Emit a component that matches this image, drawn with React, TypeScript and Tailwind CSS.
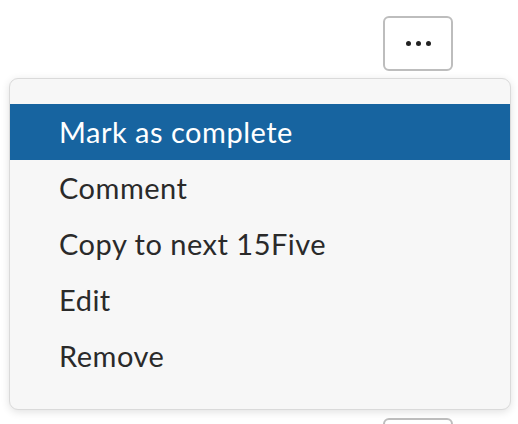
const items = ["Mark as complete", "Comment", "Copy to next 15Five", "Edit", "Remove"];

function Dots() {
  return (
    <div className="flex items-center gap-[5px]">
      <span className="block h-[5px] w-[5px] rounded-full bg-[#222]" />
      <span className="block h-[5px] w-[5px] rounded-full bg-[#222]" />
      <span className="block h-[5px] w-[5px] rounded-full bg-[#222]" />
    </div>
  );
}

export default function App() {
  return (
    <div
      className="h-[424px] w-[518px] overflow-hidden bg-white"
      style={{ fontFamily: "Lato, 'Open Sans', sans-serif" }}
    >
      <div className="flex justify-end pr-[65px] pt-[16px]">
        <button className="flex h-[55px] w-[70px] items-center justify-center rounded-[6px] border-2 border-[#bdbdbd] bg-white">
          <Dots />
        </button>
      </div>
      <div className="ml-[9px] mt-[7px] w-[502px] rounded-[9px] border border-[#dadada] bg-[#f7f7f7] py-[25px] shadow-[0_2px_8px_rgba(0,0,0,0.12)]">
        <ul>
          {items.map((label, i) => (
            <li
              key={label}
              className={
                i === 0
                  ? "flex h-[56px] items-center bg-[#1764a0] pl-[49px] text-[29px] tracking-[0.5px] text-white"
                  : "flex h-[56px] items-center pl-[49px] text-[29px] tracking-[0.5px] text-[#2a2a2a]"
              }
            >
              {label}
            </li>
          ))}
        </ul>
      </div>
      <div className="flex justify-end pr-[65px] pt-[8px]">
        <div className="h-[40px] w-[70px] rounded-[6px] border-2 border-[#bdbdbd] bg-white" />
      </div>
    </div>
  );
}
